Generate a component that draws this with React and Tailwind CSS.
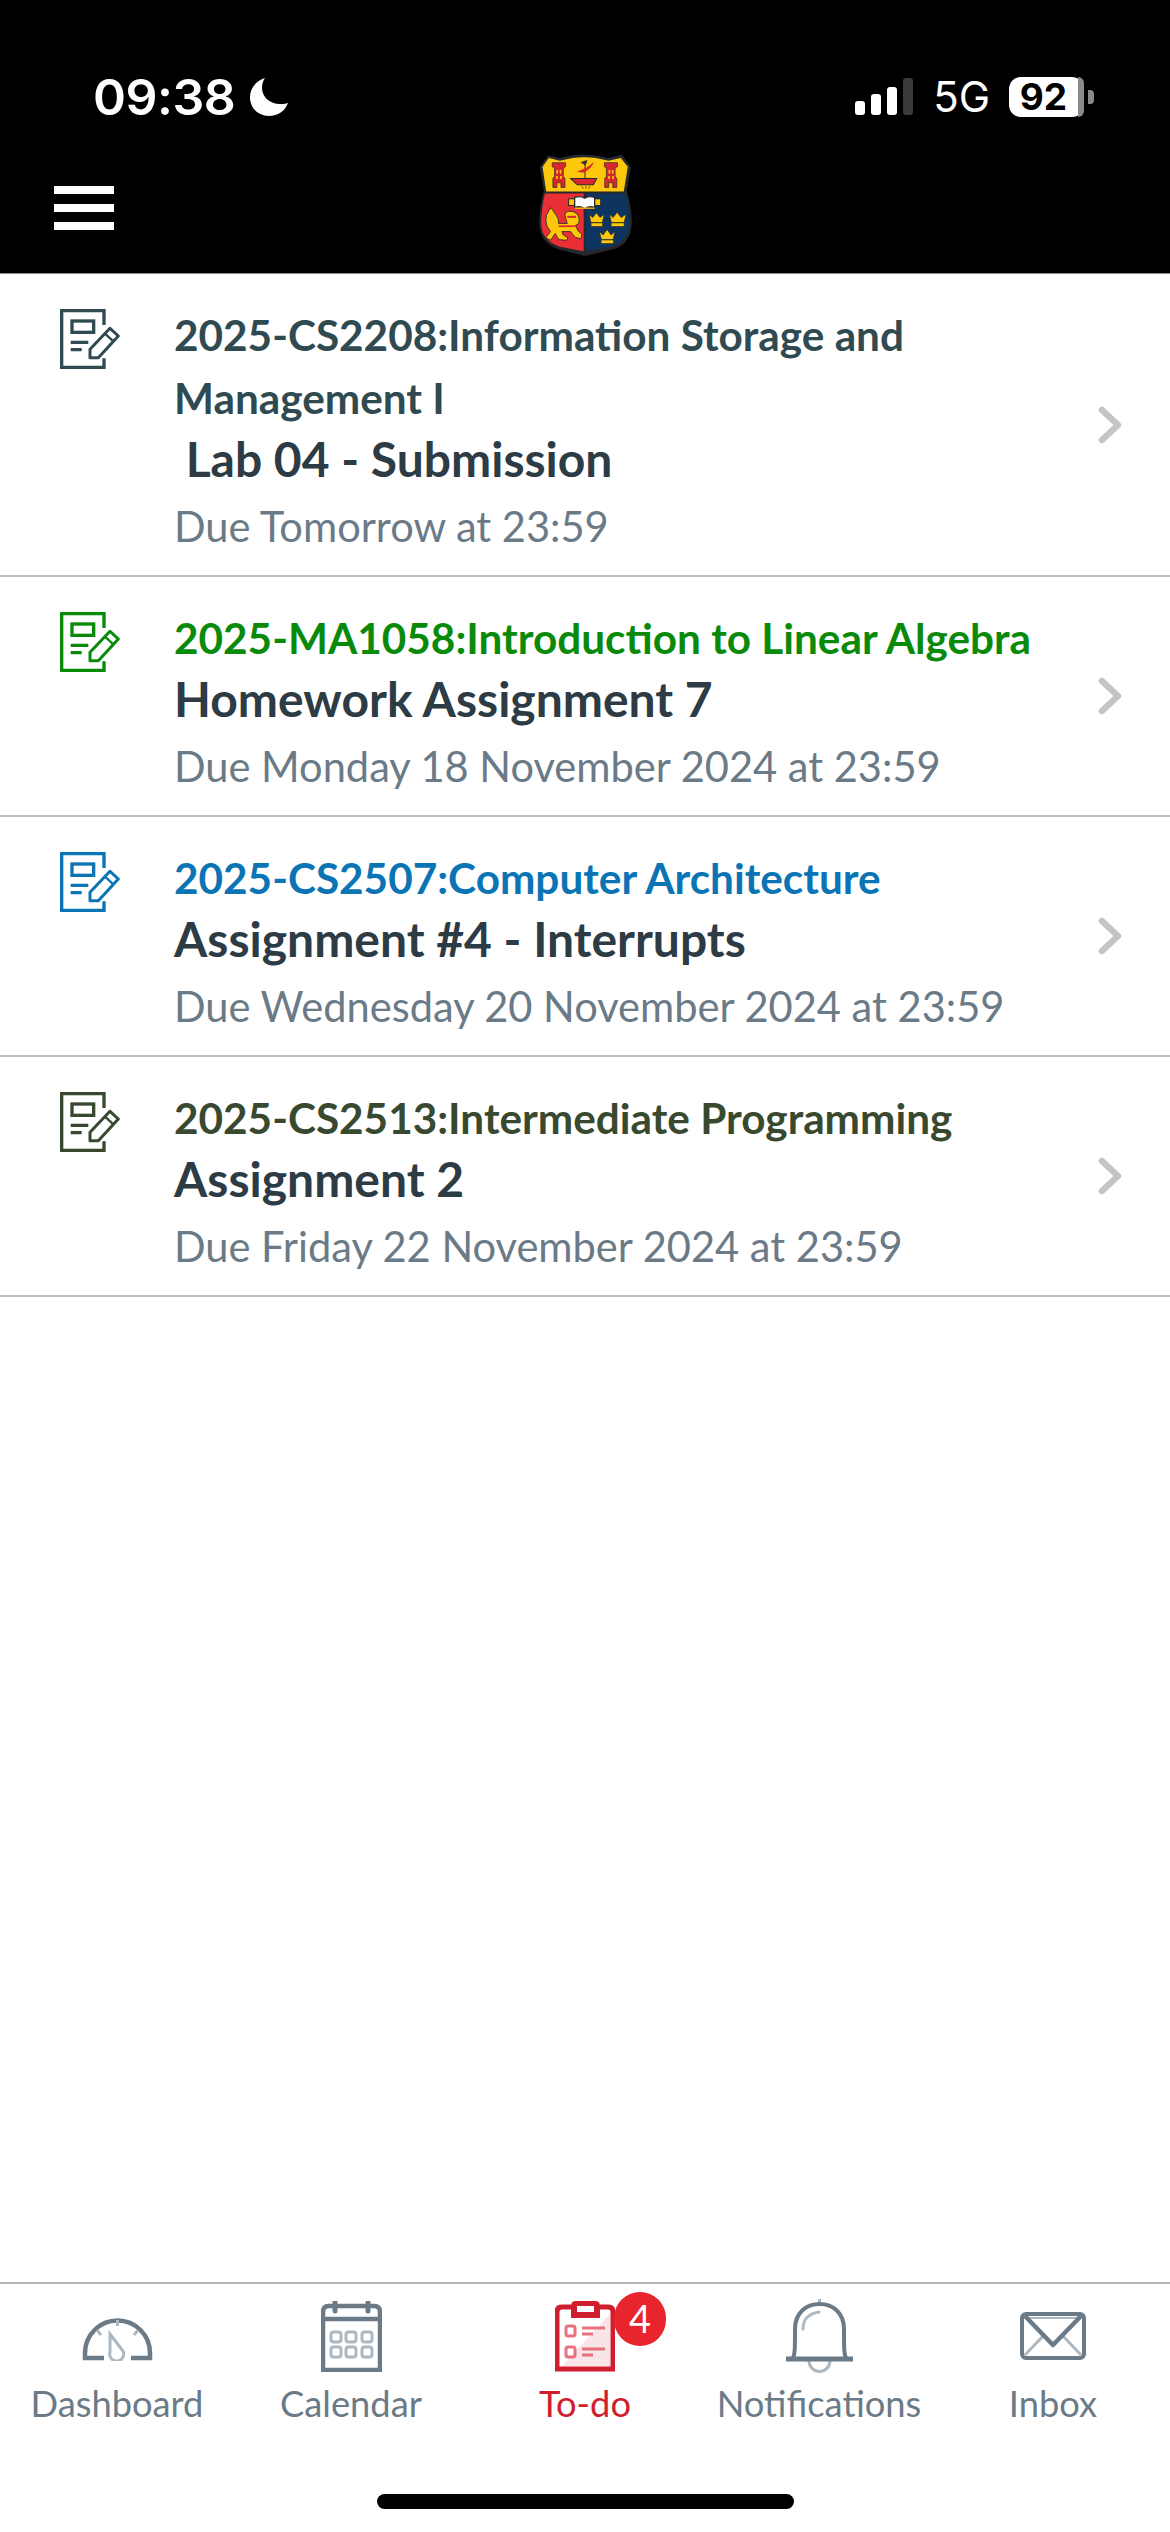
const todos = [
  { course: '2025-CS2208:Information Storage and Management I', title: ' Lab 04 - Submission', due: 'Due Tomorrow at 23:59', color: '#2f4a50', text: 'text-[#2f4a50]' },
  { course: '2025-MA1058:Introduction to Linear Algebra', title: 'Homework Assignment 7', due: 'Due Monday 18 November 2024 at 23:59', color: '#0a8a0a', text: 'text-[#0a8a0a]' },
  { course: '2025-CS2507:Computer Architecture', title: 'Assignment #4 - Interrupts', due: 'Due Wednesday 20 November 2024 at 23:59', color: '#0b74b5', text: 'text-[#0b74b5]' },
  { course: '2025-CS2513:Intermediate Programming', title: 'Assignment 2', due: 'Due Friday 22 November 2024 at 23:59', color: '#38492f', text: 'text-[#38492f]' },
];

const AssignmentIcon = ({ color }) => (
  <svg width="60" height="60" viewBox="60 57 180 180" fill="none" stroke={color} strokeWidth="10" className="shrink-0">
    <path d="M192 105V62H65V232H192V205" />
    <rect x="96" y="93" width="65" height="34" />
    <path d="M92 157H145M92 179H125" />
    <path d="M150 203V178L210 115L235 138L175 203Z" strokeLinejoin="round" strokeWidth="9" />
    <path d="M195 131L221 155" strokeWidth="7" />
  </svg>
);

const Chevron = () => (
  <svg width="24" height="38" viewBox="0 0 24 38" fill="none" className="shrink-0">
    <path d="M4 4L20 19L4 34" stroke="#c4c4c4" strokeWidth="6.5" strokeLinecap="round" strokeLinejoin="round" />
  </svg>
);

const Crest = () => (
  <svg width="93" height="102" viewBox="178 80 277 305">
    <path d="M205 84L240 92Q290 80 315 82Q345 82 385 92L425 82L452 118L440 190Q456 240 455 290Q450 350 400 365L315 385L235 365Q180 345 178 290Q178 240 192 190L180 118Z" fill="#25282c" />
    <path d="M207 92L240 100Q290 88 315 90Q345 90 385 100L422 92L443 118L431 192H199L188 118Z" fill="#fdc70c" />
    <path d="M195 198H311V371L240 357Q186 340 184 290Q184 245 195 198Z" fill="#ea2e36" />
    <path d="M317 198H436Q449 245 448 290Q446 340 392 357L317 371Z" fill="#0e3560" />
    {/* towers */}
    <path d="M217 106H257V118L250 122V148L255 152V180H243V166H231V180H219V152L224 148V122L217 118Z" fill="#d92530" stroke="#25282c" strokeWidth="2" />
    <path d="M373 106H412V118L405 122V148L410 152V180H398V166H386V180H374V152L379 148V122L373 118Z" fill="#d92530" stroke="#25282c" strokeWidth="2" />
    <path d="M232 128V138M242 128V138M388 128V138M398 128V138M231 146V155M243 146V155M387 146V155M399 146V155" stroke="#fdc70c" strokeWidth="5" />
    {/* ship */}
    <path d="M272 153H350L340 172H292Z" fill="#d92530" stroke="#25282c" strokeWidth="3" />
    <path d="M315 100V153M305 105L320 100L316 112Z" stroke="#25282c" strokeWidth="3" fill="#d92530" />
    <path d="M290 132Q320 125 342 103Q335 125 308 136Z" fill="#d92530" />
    <path d="M305 176L310 184M318 176V184M330 176L326 184" stroke="#25282c" strokeWidth="2" />
    {/* book */}
    <rect x="266" y="214" width="96" height="20" fill="#fdc70c" stroke="#25282c" strokeWidth="3" />
    <path d="M284 210Q300 204 314 212Q328 204 344 210V240Q328 234 314 244Q300 234 284 240Z" fill="#fff" stroke="#25282c" strokeWidth="4" />
    <path d="M284 242H344" stroke="#fdc70c" strokeWidth="4" />
    {/* lion */}
    <path d="M200 262L213 240L228 262Q238 275 236 288H262L258 274Q252 262 258 254Q276 246 292 260Q302 274 296 288L286 294L296 312L306 320L302 334L284 328L272 312H246L250 322L264 330L260 338L236 336L226 318L212 338L198 330L212 312Q198 296 198 278Z" fill="#fdc70c" stroke="#25282c" strokeWidth="2.5" />
    <path d="M236 296H284" stroke="#d92530" strokeWidth="5" fill="none" />
    <path d="M262 268H288" stroke="#d92530" strokeWidth="6" fill="none" />
    {/* crowns */}
    <path d="M327 260L338 270L349 256L360 270L372 260L367 285H333Z" fill="#fdc70c" stroke="#25282c" strokeWidth="2" />
    <rect x="333" y="286" width="35" height="11" fill="#fdc70c" stroke="#25282c" strokeWidth="2" />
    <path d="M388 260L399 270L411 254L423 270L438 260L432 285H394Z" fill="#fdc70c" stroke="#25282c" strokeWidth="2" />
    <rect x="393" y="286" width="39" height="11" fill="#fdc70c" stroke="#25282c" strokeWidth="2" />
    <path d="M358 312L369 322L381 306L393 322L405 312L399 336H364Z" fill="#fdc70c" stroke="#25282c" strokeWidth="2" />
    <rect x="363" y="337" width="37" height="11" fill="#fdc70c" stroke="#25282c" strokeWidth="2" />
  </svg>
);

const Moon = () => (
  <svg width="38" height="38" viewBox="0 0 38 38" fill="white">
    <path d="M15 0C6 3 0 10 0 19C0 30 8 38 19 38C28 38 35 33 38 25C35 26 33 26 30 26C20 26 12 19 12 10C12 6 13 3 15 0Z" />
  </svg>
);

const StatusBar = () => (
  <div className="flex justify-between items-center pl-[93px] pr-[76px] pt-[57px] h-[137px] font-['Inter',sans-serif] text-white">
    <div className="flex items-center gap-[15px]">
      <span className="text-[50px] leading-[42px] font-semibold tracking-[-0.5px]">09:38</span>
      <Moon />
    </div>
    <div className="flex items-center mb-[1px]">
      <div className="flex items-end gap-[6px] h-[37px]">
        <div className="w-[10px] h-[14px] rounded-[3px] bg-white" />
        <div className="w-[10px] h-[21px] rounded-[3px] bg-white" />
        <div className="w-[10px] h-[28px] rounded-[3px] bg-white" />
        <div className="w-[10px] h-[37px] rounded-[3px] bg-[#3a3a3a]" />
      </div>
      <span className="ml-[20px] text-[42px] leading-[40px] font-normal">5G</span>
      <div className="ml-[19px] w-[75px] h-[40px] rounded-l-[12px] rounded-r-[12px] bg-white flex">
        <span className="flex-1 text-center text-black text-[37px] leading-[40px] font-bold">92</span>
        <div className="w-[6px] rounded-r-[12px] bg-[#8a8a8a]" />
      </div>
      <div className="ml-[4px] w-[6px] h-[14px] rounded-r-[4px] bg-[#8a8a8a]" />
    </div>
  </div>
);

const TodoRow = ({ item }) => (
  <div className="flex items-center border-b-2 border-[#b8bfc4] pl-[60px] pr-[48px]">
    <div className="self-start pt-[35px] w-[114px] shrink-0">
      <AssignmentIcon color={item.color} />
    </div>
    <div className="flex-1 pt-[29px] pb-[16px]">
      <div className={`text-[42.3px] leading-[63px] font-bold ${item.text}`}>{item.course}</div>
      <div className="text-[48px] leading-[60px] font-bold text-[#2d3b45] whitespace-pre">{item.title}</div>
      <div className="mt-[4px] text-[41.6px] leading-[66px] text-[#6b7a87]">{item.due}</div>
    </div>
    <Chevron />
  </div>
);

const DashboardIcon = () => (
  <svg width="71" height="50" viewBox="0 0 71 50" fill="none">
    <path d="M22 47H3V42A32.5 32.5 0 0 1 68 42V47H49" stroke="#6b7a87" strokeWidth="4.5" />
    <path d="M35.5 9V15M15 19L19 24M56 19L52 24" stroke="#aeb8c0" strokeWidth="3" />
    <path d="M28 23L41 40A7 7 0 1 1 28 41Z" stroke="#aeb8c0" strokeWidth="3" />
  </svg>
);

const CalendarIcon = () => (
  <svg width="61" height="71" viewBox="0 0 61 71" fill="none">
    <path d="M2 69V11Q2 5 8 5H53Q59 5 59 11V69ZM2 18H59" stroke="#6b7a87" strokeWidth="4.5" />
    <path d="M14 1V10M47 1V10" stroke="#6b7a87" strokeWidth="5" strokeLinecap="round" />
    <g stroke="#aeb8c0" strokeWidth="3">
      <rect x="10" y="31" width="10" height="10" rx="2.5" />
      <rect x="25" y="31" width="10" height="10" rx="2.5" />
      <rect x="41" y="31" width="10" height="10" rx="2.5" />
      <rect x="10" y="46" width="10" height="10" rx="2.5" />
      <rect x="25" y="46" width="10" height="10" rx="2.5" />
      <rect x="41" y="46" width="10" height="10" rx="2.5" />
    </g>
  </svg>
);

const TodoIcon = () => (
  <svg width="60" height="72" viewBox="0 0 60 72" fill="none">
    <path d="M55 14L7 66H55Z" fill="#f9e5e7" />
    <path d="M16 7H7Q2 7 2 12V69H58V12Q58 7 53 7H45" stroke="#d01e2e" strokeWidth="5" />
    <path d="M16 18V6Q16 1 21 1H40Q45 1 45 6V18Z" fill="#d01e2e" />
    <rect x="22" y="6" width="17" height="6" fill="#fff" />
    <g stroke="#e8727e" strokeWidth="3">
      <rect x="11" y="26" width="9" height="10" rx="2" />
      <rect x="11" y="47" width="9" height="10" rx="2" />
      <path d="M27 28H50M27 34H38M27 49H50M27 55H38" />
    </g>
  </svg>
);

const BellIcon = () => (
  <svg width="67" height="74" viewBox="0 0 67 74" fill="none">
    <path d="M33.5 0V6" stroke="#aeb8c0" strokeWidth="3" />
    <path d="M23 62A10.5 10.5 0 0 0 44 62" stroke="#aeb8c0" strokeWidth="3" />
    <path d="M17 30C17 20 22 15 33 13" stroke="#aeb8c0" strokeWidth="3" strokeLinecap="round" />
    <path d="M7 59C9 55 9 50 9 30C9 14 20 5 33.5 5C47 5 58 14 58 30C58 50 58 55 60 59" stroke="#6b7a87" strokeWidth="4" />
    <path d="M0 60H67" stroke="#6b7a87" strokeWidth="5" />
  </svg>
);

const InboxIcon = () => (
  <svg width="66" height="48" viewBox="0 0 66 48" fill="none">
    <path d="M5 43L23 24M61 43L43 24" stroke="#aeb8c0" strokeWidth="3" />
    <path d="M5 6H61" stroke="#aeb8c0" strokeWidth="2" />
    <path d="M5 4L33 33L61 4" stroke="#6b7a87" strokeWidth="4.5" strokeLinejoin="round" />
    <rect x="2" y="2" width="62" height="44" rx="4" stroke="#6b7a87" strokeWidth="4" />
  </svg>
);

const tabs = [
  { label: 'Dashboard', Icon: DashboardIcon },
  { label: 'Calendar', Icon: CalendarIcon },
  { label: 'To-do', Icon: TodoIcon, active: true, badge: 4 },
  { label: 'Notifications', Icon: BellIcon },
  { label: 'Inbox', Icon: InboxIcon },
];

const TabBar = () => (
  <div className="border-t-2 border-[#b4b4b4] h-[250px] relative">
    <div className="grid grid-cols-5 pt-[14px]">
      {tabs.map(({ label, Icon, active, badge }) => (
        <div key={label} className="flex flex-col items-center">
          <div className="h-[76px] flex items-center justify-center relative">
            <Icon />
            {badge && (
              <span className="absolute left-[59px] top-[-6px] w-[52px] h-[54px] rounded-full bg-[#e8242c] text-white text-[38px] leading-[52px] text-center">
                {badge}
              </span>
            )}
          </div>
          <span className={`mt-[7px] text-[36.3px] leading-[45px] whitespace-nowrap ${active ? 'text-[#d01e2e]' : 'text-[#6b7a87]'}`}>
            {label}
          </span>
        </div>
      ))}
    </div>
    <div className="absolute left-[377px] top-[210px] w-[417px] h-[15px] rounded-full bg-black" />
  </div>
);

export default function App() {
  return (
    <div className="w-[1170px] h-[2532px] flex flex-col bg-white font-['Lato',sans-serif]">
      <div className="bg-black h-[274px] shrink-0 border-b border-[#8c8c8c]">
        <StatusBar />
        <div className="grid grid-cols-[1fr_auto_1fr] items-center px-[54px] mt-[17px]">
          <div className="flex flex-col gap-[10px] w-[60px] mt-[6px]">
            <div className="h-[8px] bg-white" />
            <div className="h-[8px] bg-white" />
            <div className="h-[8px] bg-white" />
          </div>
          <Crest />
          <div />
        </div>
      </div>
      <div className="flex-1">
        {todos.map(item => (
          <TodoRow key={item.course} item={item} />
        ))}
      </div>
      <TabBar />
    </div>
  );
}
